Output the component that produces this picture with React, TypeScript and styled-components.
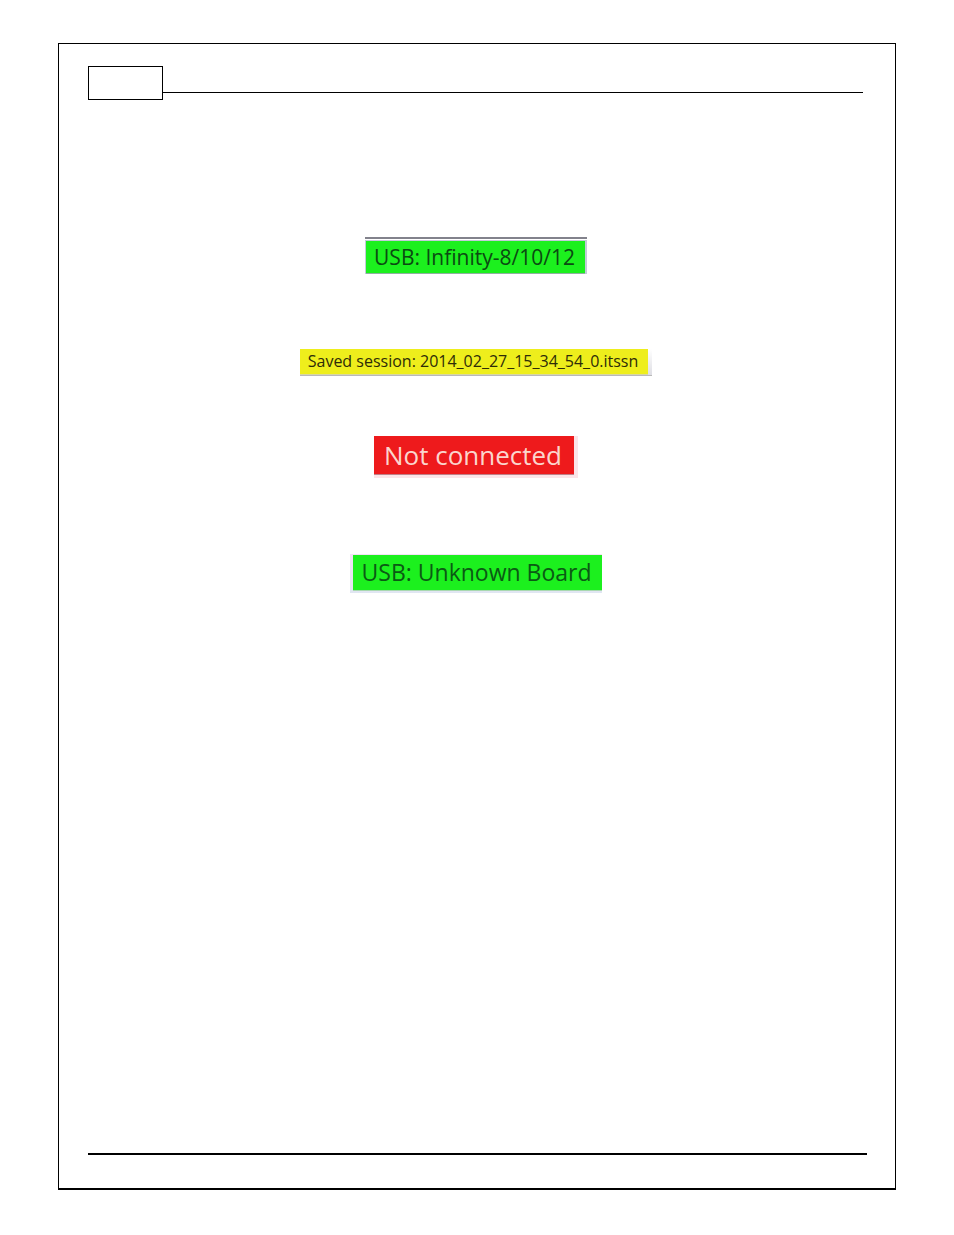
import React from "react";
import styled, { createGlobalStyle } from "styled-components";

const GlobalStyle = createGlobalStyle`
  * {
    box-sizing: border-box;
  }

  body {
    margin: 0;
    background: #ffffff;
    color: #000000;
    font-family: "Open Sans", "Noto Sans", sans-serif;
  }
`;

const Page = styled.div`
  display: flex;
  min-height: 100vh;
  padding: 43px 58px 45px;
`;

const Sheet = styled.div`
  flex: 1;
  display: flex;
  flex-direction: column;
  padding: 22px 28px 33px 29px;
  border: 1px solid #000000;
  border-bottom-width: 2px;
`;

const Header = styled.header`
  display: flex;
  align-items: flex-start;
  padding-right: 4px;
`;

const PageNumberBox = styled.div`
  width: 75px;
  height: 34px;
  border: 1px solid #000000;
`;

const HeaderRule = styled.div`
  flex: 1;
  height: 27px;
  border-bottom: 1px solid #000000;
`;

const Statuses = styled.main`
  flex: 1;
  display: flex;
  flex-direction: column;
  align-items: center;
  padding: 137px 3px 40px 0;
`;

const Status = styled.div<{ $gap: number }>`
  margin-bottom: ${({ $gap }) => $gap}px;
`;

const InfinityFrame = styled(Status)`
  padding: 2px 2px 1px 1px;
  border-top: 2px solid #82828c;
  background: linear-gradient(#ffffff 0 1px, #c3cbd8 1px);
`;

const SessionFrame = styled(Status)`
  padding: 0 4px 1px 0;
  border-bottom: 1px solid #b9b9b9;
  background: linear-gradient(#ffffff, #dedee4);
`;

const DisconnectedFrame = styled(Status)`
  padding: 0 4px 4px 0;
  background: #fbe4e8;
`;

const UnknownFrame = styled(Status)`
  padding: 1px 0 3px 3px;
  background: linear-gradient(#f4e2f6, #e0e6f2);
`;

const Label = styled.div<{ $width: number; $height: number; $size: number; $fill: string; $ink: string; $edge: string }>`
  width: ${({ $width }) => $width}px;
  height: ${({ $height }) => $height}px;
  line-height: ${({ $height }) => $height}px;
  padding-right: 2px;
  font-size: ${({ $size }) => $size}px;
  text-align: center;
  white-space: nowrap;
  background: ${({ $fill }) => $fill};
  color: ${({ $ink }) => $ink};
  box-shadow: 0 1px 0 ${({ $edge }) => $edge};
`;

const FooterRule = styled.footer`
  height: 2px;
  background: #000000;
`;

export default function App() {
  return (
    <>
      <GlobalStyle />
      <Page>
        <Sheet>
          <Header>
            <PageNumberBox />
            <HeaderRule />
          </Header>
          <Statuses>
            <InfinityFrame $gap={75}>
              <Label $width={219} $height={32} $size={21} $fill="#1cf01e" $ink="#0b4a12" $edge="#8fb0a0">
                USB: Infinity-8/10/12
              </Label>
            </InfinityFrame>
            <SessionFrame $gap={60}>
              <Label $width={348} $height={25} $size={16} $fill="#eeee1c" $ink="#2e2c08" $edge="#d8d8a0">
                Saved session: 2014_02_27_15_34_54_0.itssn
              </Label>
            </SessionFrame>
            <DisconnectedFrame $gap={76}>
              <Label $width={200} $height={38} $size={26} $fill="#ee1a1c" $ink="#fbd5cd" $edge="#c08088">
                Not connected
              </Label>
            </DisconnectedFrame>
            <UnknownFrame $gap={0}>
              <Label $width={249} $height={35} $size={23} $fill="#1cf01e" $ink="#0b5a14" $edge="#a8d8b0">
                USB: Unknown Board
              </Label>
            </UnknownFrame>
          </Statuses>
          <FooterRule />
        </Sheet>
      </Page>
    </>
  );
}
